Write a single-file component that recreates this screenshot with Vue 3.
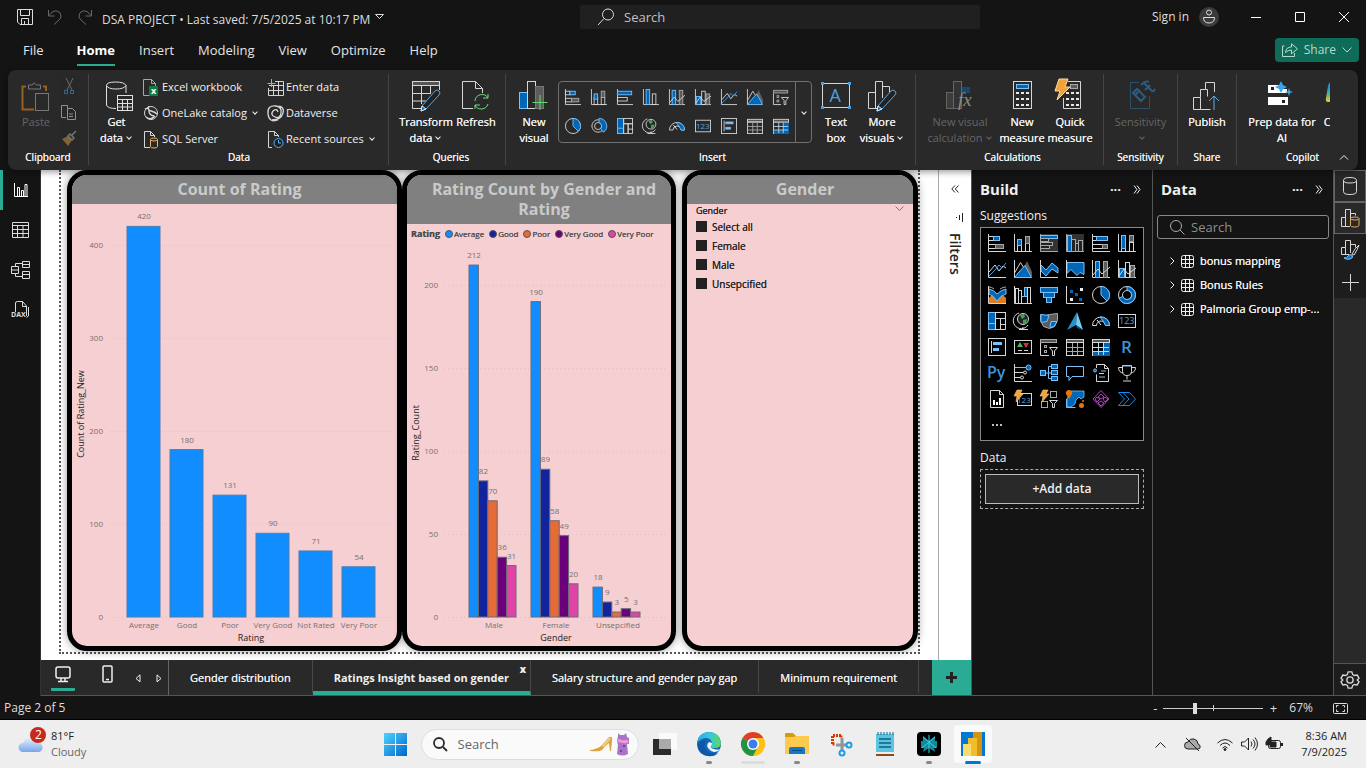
<script setup>
const W = '#d6d6d6'
const B = '#0067b8'
const L = '#7cc0f5'
const G = '#5c5c5c'
const S = '#a8a8a8'
const box = (x, y, w, h, stroke = W, fill = 'none') =>
  `<rect x="${x}" y="${y}" width="${w}" height="${h}" stroke="${stroke}" fill="${fill}"/>`
const line = (d, stroke = W, fill = 'none', w = 1) =>
  `<path d="${d}" stroke="${stroke}" fill="${fill}" stroke-width="${w}"/>`
const dot = (cx, cy, r, fill, stroke = 'none') =>
  `<circle cx="${cx}" cy="${cy}" r="${r}" fill="${fill}" stroke="${stroke}"/>`
const txt = (x, y, size, fill, t, extra = '') =>
  `<text x="${x}" y="${y}" font-size="${size}" fill="${fill}" stroke="none" font-family="Open Sans, sans-serif" ${extra}>${t}</text>`
const axis = line('M.5 0V17.5H18')
const bolt = `<path d="M3 0h5L6 4h3L2 12l1-6H0z" fill="#f2a23a" stroke="#f7cf8b" stroke-width=".6"/>`
const funnel = line('M9.5 9.5H17.5L14.5 13V17.5H12.5V13Z')
const pencil =
  line('M11 31l1-5L25 11q2-2 4 0t0 4L16 29Z', '#5ba7e0', '#222') + `<path d="M11 31l1-5 4 3z" fill="${B}"/>`

const icons = {
  stackedBar: axis + box(0.5, 2.5, 5, 4) + box(5.5, 2.5, 6, 4, L, B) + box(0.5, 10.5, 7, 4) + box(7.5, 10.5, 8, 4, S, G),
  stackedCol: axis + box(3.5, 9.5, 4, 8) + box(3.5, 5.5, 4, 6, L, B) + box(11.5, 9.5, 4, 8) + box(11.5, 2.5, 4, 7, S, G),
  bar: axis + box(0.5, 2.5, 16, 4, L, B) + box(0.5, 9.5, 11, 4),
  col: axis + box(3.5, 0.5, 4, 17, L, B) + box(10.5, 5.5, 4, 12),
  barDim: `<rect width="18" height="18" fill="#333" stroke="none"/>` + line('M.5 0V17.5H18', S) + box(0.5, 1.5, 17, 3, L, B) + box(0.5, 4.5, 8, 3, S, '#222') + box(0.5, 8.5, 12, 3, S, '#222') + box(0.5, 11.5, 9, 3, S, '#222'),
  colDim: `<rect width="18" height="18" fill="#333" stroke="none"/>` + line('M.5 0V17.5H18', S) + box(1.5, 1.5, 4, 16, L, B) + box(5.5, 5.5, 4, 12, S, '#222') + box(9.5, 9.5, 3, 8, S, '#222') + box(12.5, 6.5, 4, 11, S, '#222'),
  fullBar: axis + box(0.5, 2.5, 4, 4) + box(4.5, 2.5, 11, 4, L, B) + box(0.5, 10.5, 10, 4) + box(10.5, 10.5, 5, 4, S, G),
  fullCol: axis + box(3.5, 12.5, 4, 5) + box(3.5, 1.5, 4, 13, L, B) + box(11.5, 8.5, 4, 9) + box(11.5, 1.5, 4, 6, S, G),
  line: axis + line('M1 12L7 5l4 6 4-5 3 2') + line('M1 16L8 9l3-4 3 3 4-5', '#3c9ae8'),
  area: `<path d="M13 1l5 11v5L9 9z" fill="${G}" stroke="none"/>` + line('M.5 13L6.5 2.5 10 8') + line('M.5 17.5L5 12l6-6.500 6.500 12z', L, B) + line('M.5 0V17.5'),
  stackedArea: line('M1 5l5 5 6-7 6 5v5l-6-4-6 7-5-5z', L, B) + axis,
  fullArea: line('M1 2.5h17v12l-4-2-3 3-6-6-4 4z', L, B) + axis,
  comboStack: axis + box(3.5, 1.5, 4, 16, L, B) + box(11.5, 1.5, 4, 16, S, G) + line('M1 15l5-6 4 5 8-7'),
  comboCluster: axis + box(1.5, 8.5, 5, 9, L, B) + box(7.5, 2.5, 4, 15) + box(12.5, 5.5, 4, 12, S, G) + line('M1 16l5-7 4 5 8-6'),
  ribbon: `<path d="M1 17v-5q4-5 8-5t9 5v5z" fill="#e07c1c" stroke="none"/>` + line('M1 3q5 1 8 5 4-4 9-5v5q-5 1-9 7-4-6-8-7z', L, B) + line('M1 1q3 0 5 2M12 3q3-2 6-2', S) + axis,
  waterfall: axis + box(1.5, 2.5, 3, 15) + box(4.5, 4.5, 3, 13) + line('M7.5 10.5h3v-8h3', L) + box(10.5, 1.5, 3, 9, L, B) + box(13.5, 1.5, 3, 16),
  funnelChart: box(0.5, 1.5, 17, 5, L, B) + box(3.5, 6.5, 11, 5, L, B) + box(6.5, 11.5, 5, 5, L, B),
  scatter: axis + box(4.5, 4.5, 2, 2, B, B) + box(9.5, 7.5, 2, 2, B, B) + box(13.5, 12.5, 2, 2, B, B) + box(4.5, 12.5, 2, 2, '#eee', '#eee') + box(14.5, 2.5, 2, 2, '#eee', '#eee'),
  pie: dot(9, 9, 8.5, 'none', W) + line('M9 .5A8.5 8.5 0 0 1 15 15L9 9z', L, B),
  donut: dot(9, 9, 8.5, 'none', W) + dot(9, 9, 4.5, 'none', W) + line('M9 .5A8.5 8.5 0 1 1 1 12l4-1.5A4.5 4.5 0 1 0 9 4.5z', L, B),
  donutSmall: dot(8, 9, 7, 'none', W) + dot(8, 9, 4, 'none', W) + line('M9 .5A8.5 8.5 0 0 1 14 16l-3-4A4.5 4.5 0 0 0 9 5z', L, B),
  treemap: box(0.5, 0.5, 7, 17, L, B) + box(7.5, 0.5, 10, 6) + box(7.5, 6.5, 5, 11) + box(12.5, 6.5, 5, 6) + line('M12.5 12.5v5h5v-5') + line('M.5 11.5h7', L),
  globe: dot(9, 7, 5.5, '#222', W) + `<path d="M6 3l4-1 1 3-3 2zM9 8l4-1-1 4-3 1z" fill="#3fa35b" stroke="none"/>` + line('M5 1a8 8 0 1 0 9 12M9 15v2.5M5 17.5h9'),
  filledMap: line('M.5 2.5l5 1 4-1 8-1v7l-3 6-5 2-6-2-3-6z', S, G) + line('M1 2.5l8 1-2 6-6 1zM11 9.5h6l-3 5-4 1z', L, B),
  azureMap: `<g stroke="none"><path d="M11 0L1 18l9-5z" fill="#2490d0"/><path d="M11 0l6 18-7-5z" fill="#70cdf4"/><path d="M10 13l7 5-6-2z" fill="#0a5a9c"/></g>`,
  gauge: line('M.5 13.5A8.5 8.5 0 0 1 17.5 13.5H13.5A4.5 4.5 0 0 0 4.5 13.5Z') + line('M8 5a8.5 8.5 0 0 1 9.500 8.500h-4l-2-4z', L, B) + line('M9 13l-4-5', '#eee'),
  card: box(0.5, 2.5, 17, 13) + txt(1, 12, 9, '#4ba3e8', '123'),
  multiCard: box(0.5, 0.5, 17, 17) + line('M3.5 3v12') + box(5.5, 4.5, 8, 2, L, L) + box(5.5, 10.5, 5, 2, L, L),
  kpi: box(0.5, 2.5, 17, 13) + `<path d="M3 9l3-5 3 5z" fill="#4cb35d" stroke="none"/><path d="M9 5h6l-3 5z" fill="#e02c38" stroke="none"/>` + line('M4 12.5h4M10 12.5h4'),
  slicer: box(0.5, 1.5, 16, 3, S, '#555') + line('M.5 5v12.5H9') + box(4.5, 7.5, 2, 2, S) + box(4.5, 12.5, 2, 2, S) + funnel,
  table: box(0.5, 1.5, 17, 3, W, '#555') + box(0.5, 4.5, 17, 13) + line('M6.5 5v12M11.5 5v12M1 9.5h16M1 13.5h16', S),
  matrix: box(0.5, 4.5, 17, 13) + `<path d="M12 5h6v13H1v-4h11z" fill="${B}" stroke="none"/>` + line('M6.5 5v12M11.5 5v12M1 9.5h16M1 13.5h16', '#b8daf2') + box(0.5, 1.5, 17, 3, W, '#555'),
  r: txt(3, 15, 17, '#3c95dd', 'R', 'font-weight="600"'),
  py: txt(-1, 14, 16, '#3c95dd', 'Py', 'font-weight="600"'),
  influencers: line('M.5 0v17.5H18M1 8.5h9M1 13.5h6') + line('M1 3.5h11', L) + dot(14.5, 3.5, 2.5, B, L) + dot(11, 8.5, 1.5, '#111', W) + dot(8, 13.5, 1.5, '#111', W),
  decomposition: box(0.5, 6.5, 5, 5, L, B) + box(11.5, 0.5, 6, 4, L, B) + box(11.5, 6.5, 6, 4, L, B) + box(11.5, 12.5, 6, 4, L, B) + line('M6 9h5M8.5 9V2.5h3M8.5 9v5.5h3', L),
  qna: line('M.5 2.5h17v10H6l-3 4v-4H.5z', L),
  narrative: line('M4.5 4V.5h8l4 4v13h-12v-7M12.5.5v4h4M7 9.5h5') + dot(3, 6.5, 1.5, B, L) + line('M9 7h5M7 13h6', L),
  trophy: line('M4.5 1.5h9v6q0 4-4.5 4t-4.5-4zM4.5 3.5h-4q0 5 5 5.5M13.5 3.5h4q0 5-5 5.5M9 11.5v4M5 17h8') + line('M5 2h8', L),
  report: line('M2.5.5h9l4 4v13h-13zM11.5.5v4h4') + line('M6 15v-5M9 15v-3M12 15V8', '#fff', 'none', 2),
  boltCard: box(3.5, 3.5, 14, 12) + txt(3, 13, 8, '#4ba3e8', '123') + bolt,
  boltSlicer: box(1.5, 11.5, 6, 6, S) + box(10.5, 1.5, 6, 6, S) + line('M9.500 10.5h8l-3 3v4h-2v-4z') + bolt,
  arcgis: line('M.5 9v8.500h9', L) + `<path d="M5 1h13v6l-3 2-2-2-3 3-1 4-4 3H1V9z" fill="${B}" stroke="${L}" stroke-width=".8"/><path d="M3 0a3 3 0 0 1 3 4L3 9 0 4a3 3 0 0 1 3-4z" fill="#e8750b" stroke="none"/>` + dot(15.5, 15.5, 2.5, '#e8750b') + dot(17, 11, 1, '#e8750b'),
  apps: line('M9 .5l8 8.500-8 8.500L1 9z', '#a845b8') + line('M9 4l3 3-3 2-3-2zM5 7l3 2-3 3-2-3zM13 7l3 2-3 3-2-3zM9 11l3 2-3 3-3-3z', '#a845b8'),
  automate: line('M.5 2.5h11l6 6.500-6 6.500H.5l6-6.500z', '#1888e8') + line('M5 2.5l6 6.500-6 6.500', '#1888e8'),
  more: dot(5, 9, 1, '#fff') + dot(9, 9, 1, '#fff') + dot(13, 9, 1, '#fff'),

  excel: line('M7 16.5H.5V.5h8l4 4V7M8.5.5v4h4', S) + `<path d="M6 7h9v10H6z" fill="#107c41" stroke="none"/>` + txt(8, 15, 9, '#fff', 'x', 'font-weight="700"'),
  onelake: dot(8, 8, 6.5, 'none', W) + line('M2 4q4-2 4 2t5 5M6 1q-2 4 2 5t6 3M3 12q5 4 9-1', W, 'none', 1.4),
  sql: line('M7 16.5H1.5V.5h6l4 4V6M7.5.5v4h4') + line('M7.5 8.5v7q0 1.5 3.5 1.5t3.5-1.500v-7q0-1.500-3.500-1.500T7.5 8.5q0 1.500 3.500 1.500t3.500-1.500', '#f0b162'),
  enterData: line('M8 2.5h8.500v14H1.5V9M2 6.5h14M2 11.5h14M6.5 7v9M11.5 3v13') + line('M4.5 0v8M.5 4.5h8', '#5fdc6c'),
  dataverse: line('M11 15Q2 18 1 9t8-8q6 1 5 7t-6 4-2-6q4-3 5 1M5 15Q14 15 16 8T9 1', W, 'none', 1.3),
  recent: line('M5 16.5H1.5V.5h6l4 4V6M7.5.5v4h4') + dot(11.5, 12, 4.5, '#202020', '#5cb0f0') + line('M11.5 9v3h2.500', '#5cb0f0'),
  cut: line('M5 0l6 12M12 0L6 12', '#999') + box(3.5, 12.5, 3, 3, '#3d8bc8') + box(9.5, 12.5, 3, 3, '#3d8bc8'),
  copy: line('M5 13.5H.5V1.5h6v3') + line('M6.5 4.5h5l3 3v8h-8zM8 10h4M8 12.5h4'),
  brush: `<path d="M1 9l6-3 4 4-4 6z" fill="#c08a3c" stroke="none"/>` + line('M7 6l2-2 4 4-2 2zM11 5l4-4', '#aaa', 'none', 1.5),

  paste: line('M6 6.5H2.5V29.5H14', '#95611f', 'none', 2) + line('M23 6.5h3V11', '#95611f', 'none', 2) + line('M8.5 9V5h4q1-4 4 0h4v4z', '#777') + box(15.5, 13.5, 13, 17, '#777', '#292929'),
  getData: line('M15 28.5Q6.5 28.5 5.5 25V5.5q0-3.500 9-3.500T25 5.5V13M5.5 5.5Q7 9 15 9t10-3.500', '#e0e0e0') + box(16.5, 15.5, 15, 15, '#e0e0e0', '#292929') + line('M17 19.5h14M17 23.5h14M17 27h14M21.5 20v10M26.5 20v10', '#e0e0e0'),
  transform: box(2.5, 1.5, 27, 4, W, '#555') + line('M2.5 6v22.5H12M11.5 6v18M20.5 6v8M3 13.5h18M3 21h13M29.5 6v4') + pencil,
  refresh: line('M13 28.5H2.5V1.5h13l7 7V13M15.5 1.5v7h7') + line('M15 21a7 7 0 0 1 13-3v-4M28 18h-5M28 24a7 7 0 0 1-13 1v4M15 25h5', '#6ddc80'),
  newVisual: box(1.5, 12.5, 8, 16, L, B) + box(9.5, 1.5, 8, 27) + box(17.5, 6.5, 8, 22, '#777', G) + line('M22 15v15M14.5 22.5h15', '#5fdc6c'),
  textBox: box(2.5, 3.5, 27, 24, W) + txt(9.5, 22, 18, '#4b9fe0', 'A') + [[1, 2], [28, 2], [1, 26], [28, 26]].map(([x, y]) => `<rect x="${x}" y="${y}" width="3" height="3" fill="#4b9fe0" stroke="none"/>`).join(''),
  moreVisuals: line('M2.5 28.5v-16h7M9.5 28.5V1.5h7V18M16.5 6.5h7V12M2.5 28.5h9') + pencil,
  newCalc: box(2.5, 12.5, 7, 16, '#666', '#3c3c3c') + box(9.5, 1.5, 8, 27, '#666', '#333') + `<path d="M18 7h8v6h-8z" fill="#174a70" stroke="none"/>` + `<text x="14" y="26" font-size="19" fill="#8a8a8a" stroke="none" font-style="italic" font-family="Liberation Serif, serif">fx</text>`,
  measure: box(7.5, 1.5, 18, 27) + box(10.5, 4.5, 12, 4, L, B) + [12, 18, 24].map((y) => [10, 15, 20].map((x) => `<rect x="${x}" y="${y}" width="3" height="2" fill="#e8e8e8" stroke="none"/>`).join('')).join(''),
  quick: line('M14 1.5h12.500v27H9.5V18') + box(16.5, 4.5, 7, 4, S, G) + [12, 18, 24].map((y) => [12, 17, 22].map((x) => `<rect x="${x}" y="${y}" width="3" height="2" fill="#e8e8e8" stroke="none"/>`).join('')).join('') + `<path d="M5-1h9l-3 8h5L3 20l3-9H1z" fill="#f2a23a" stroke="#f9dc9f"/>`,
  sensitivity: line('M14 2.5H5.5v26h19V16', '#28506d') + line('M8 13l4-4 8 8-4 4zM10 15l5-5M18 2l8 8q2 3 4-1M16 5q5-5 8-3M20 10l5-5', '#2c5c80', 'none', 2),
  publish: line('M2.5 29.5v-12h7v12zM9.5 17V9.5h5V2.5h9V12M9.5 29.5h10M14.5 9.5h2v7') + line('M23 30V16M18 21l5-5 5 5', '#5cb0f0'),
  prep: `<g stroke="none"><path d="M2 5h12v4h7v4H2zM2 17h20v8H2z" fill="#fff"/><path d="M5 7h3v3H5zM16 20h3v3h-3z" fill="#222"/><path d="M15 1l2 4 4 2-4 2-2 4-2-4-4-2 4-2zM23 8l1 3 3 1-3 1-1 3-1-3-3-1 3-1z" fill="#39a5ec"/></g>`,
  copilot: `<defs><linearGradient id="cp" x1="0" y1="0" x2="0" y2="1"><stop offset=".2" stop-color="#1d8de0"/><stop offset=".6" stop-color="#47b78a"/><stop offset="1" stop-color="#f3c92b"/></linearGradient></defs><path d="M5 2h19l-4 20H2q-3 0-2-4L2 6q1-4 3-4z" fill="url(#cp)" stroke="none"/>`,
}

const menus = ['File', 'Home', 'Insert', 'Modeling', 'View', 'Optimize', 'Help']
const sources = [
  { icon: 'excel', label: 'Excel workbook' },
  { icon: 'enterData', label: 'Enter data' },
  { icon: 'onelake', label: 'OneLake catalog', drop: true },
  { icon: 'dataverse', label: 'Dataverse' },
  { icon: 'sql', label: 'SQL Server' },
  { icon: 'recent', label: 'Recent sources', drop: true },
]
const gallery = ['stackedBar', 'stackedCol', 'bar', 'col', 'comboStack', 'comboCluster', 'line', 'area', 'slicer', 'pie', 'donutSmall', 'treemap', 'globe', 'gauge', 'card', 'multiCard', 'table', 'matrix']
const visuals = ['stackedBar', 'stackedCol', 'barDim', 'colDim', 'fullBar', 'fullCol', 'line', 'area', 'stackedArea', 'fullArea', 'comboStack', 'comboCluster', 'ribbon', 'waterfall', 'funnelChart', 'scatter', 'pie', 'donut', 'treemap', 'globe', 'filledMap', 'azureMap', 'gauge', 'card', 'multiCard', 'kpi', 'slicer', 'table', 'matrix', 'r', 'py', 'influencers', 'decomposition', 'qna', 'narrative', 'trophy', 'report', 'boltCard', 'boltSlicer', 'arcgis', 'apps', 'automate', 'more']

const ratings = [
  ['Average', 420],
  ['Good', 180],
  ['Poor', 131],
  ['Very Good', 90],
  ['Not Rated', 71],
  ['Very Poor', 54],
].map(([name, n], i) => ({ name, n, x: 55 + i * 43, h: n * 0.93 }))

const legend = [
  ['Average', '#118dff'],
  ['Good', '#12239e'],
  ['Poor', '#e66c37'],
  ['Very Good', '#6b007b'],
  ['Very Poor', '#e044a7'],
]
const groups = [
  ['Male', [212, 82, 70, 36, 31]],
  ['Female', [190, 89, 58, 49, 20]],
  ['Unsepcified', [18, 9, 3, 5, 3]],
].map(([name, values], g) => ({
  name,
  x: 62 + g * 62,
  bars: values.map((n, i) => ({ n, x: 62 + g * 62 + i * 9.4, h: n * 1.66, color: legend[i][1] })),
}))
const slicerItems = ['Select all', 'Female', 'Male', 'Unsepcified']
const tables = ['bonus mapping', 'Bonus Rules', 'Palmoria Group emp-...']
const tabs = ['Gender distribution', 'Ratings Insight based on gender', 'Salary structure and gender pay gap', 'Minimum requirement']
</script>

<template>
  <div class="shell">
    <header class="titlebar">
      <div class="quick">
        <button aria-label="Save"><svg width="16" height="16" viewBox="0 0 16 16"><path d="M.5.5h15v15H3l-2.500-2.500zM3.500.500v6h9v-6M4.500 15v-5.500h7V15M7.500 12v3" /></svg></button>
        <button aria-label="Undo" class="dim"><svg width="16" height="16" viewBox="0 0 16 16"><path d="M1.500 1v6h6M2 6.500Q6 1 10 2t4 5q0 2-2 4l-5 4.500" /></svg></button>
        <button aria-label="Redo" class="dim"><svg width="16" height="16" viewBox="0 0 16 16"><path d="M14.500 1v6h-6M14 6.500Q10 1 6 2T2 7q0 2 2 4l5 4.500" /></svg></button>
      </div>
      <button class="doc">DSA PROJECT • Last saved: 7/5/2025 at 10:17 PM
        <svg width="9" height="6" viewBox="0 0 9 6"><path d="M.5.5h8l-4 4z" /></svg>
      </button>
      <label class="topsearch">
        <svg width="18" height="18" viewBox="0 0 18 18"><circle cx="11" cy="6.500" r="5.500" /><path d="M7 10.500L1 17" /></svg>
        <input type="text" placeholder="Search" aria-label="Search" />
      </label>
      <div class="account">
        <button class="sign">Sign in
          <svg width="20" height="20" viewBox="0 0 20 20"><circle cx="10" cy="10" r="10" fill="#3b3b3b" stroke="none" /><circle cx="10" cy="5.500" r="2.500" /><path d="M4.500 10.500h11q0 5.500-5.500 5.500t-5.500-5.500z" /></svg>
        </button>
        <button class="win" aria-label="Minimize"><svg width="12" height="12" viewBox="0 0 12 12"><path d="M1 6.500h10" /></svg></button>
        <button class="win" aria-label="Maximize"><svg width="12" height="12" viewBox="0 0 12 12"><path d="M1.500 1.500h9v9h-9z" /></svg></button>
        <button class="win" aria-label="Close"><svg width="12" height="12" viewBox="0 0 12 12"><path d="M1 1l10 10M11 1L1 11" /></svg></button>
      </div>
    </header>

    <nav class="menubar">
      <button v-for="m in menus" :key="m" :class="{ on: m === 'Home' }">{{ m }}</button>
      <button class="share">
        <svg width="16" height="14" viewBox="0 0 16 14"><path d="M2.500 3H.500v10.500h12V10M3.500 9.500Q4 4 9.500 4V.800l6 5-6 5V7Q6 7 3.500 9.500z" /></svg>
        Share
        <svg width="10" height="6" viewBox="0 0 10 6"><path d="M.5.5L5 5l4.500-4.500" /></svg>
      </button>
    </nav>

    <section class="ribbon" aria-label="Ribbon">
      <div class="group g-clip">
        <div class="body">
          <button class="big off"><svg viewBox="0 0 32 32" v-html="icons.paste" /><span>Paste</span></button>
          <div class="minis">
            <button v-for="i in ['cut', 'copy', 'brush']" :key="i" :aria-label="i"><svg width="16" height="17" viewBox="0 0 16 17" v-html="icons[i]" /></button>
          </div>
        </div>
        <div class="cap">Clipboard</div>
      </div>
      <div class="group g-data">
        <div class="body">
          <button class="big"><svg viewBox="0 0 32 32" v-html="icons.getData" /><span>Get<br />data<i class="chev" /></span></button>
          <div class="sources">
            <button v-for="s in sources" :key="s.label"><svg width="17" height="17" viewBox="0 0 17 17" v-html="icons[s.icon]" />{{ s.label }}<i v-if="s.drop" class="chev" /></button>
          </div>
        </div>
        <div class="cap">Data</div>
      </div>
      <div class="group g-query">
        <div class="body">
          <button class="big"><svg viewBox="0 0 32 32" v-html="icons.transform" /><span>Transform<br />data<i class="chev" /></span></button>
          <button class="big"><svg viewBox="0 0 32 32" v-html="icons.refresh" /><span>Refresh</span></button>
        </div>
        <div class="cap">Queries</div>
      </div>
      <div class="group g-insert">
        <div class="body">
          <button class="big"><svg viewBox="0 0 32 32" v-html="icons.newVisual" /><span>New<br />visual</span></button>
          <div class="gallery">
            <div class="grid9">
              <button v-for="g in gallery" :key="g" :aria-label="g"><svg width="16" height="16" viewBox="0 0 18 18" v-html="icons[g]" /></button>
            </div>
            <button class="expand" aria-label="More visuals"><i class="chev" /></button>
          </div>
          <button class="big"><svg viewBox="0 0 32 32" v-html="icons.textBox" /><span>Text<br />box</span></button>
          <button class="big"><svg viewBox="0 0 32 32" v-html="icons.moreVisuals" /><span>More<br />visuals<i class="chev" /></span></button>
        </div>
        <div class="cap">Insert</div>
      </div>
      <div class="group g-calc">
        <div class="body">
          <button class="big off"><svg viewBox="0 0 32 32" v-html="icons.newCalc" /><span>New visual<br />calculation<i class="chev" /></span></button>
          <button class="big"><svg viewBox="0 0 32 32" v-html="icons.measure" /><span>New<br />measure</span></button>
          <button class="big"><svg viewBox="0 0 32 32" v-html="icons.quick" /><span>Quick<br />measure</span></button>
        </div>
        <div class="cap">Calculations</div>
      </div>
      <div class="group g-sens">
        <div class="body">
          <button class="big off"><svg viewBox="0 0 32 32" v-html="icons.sensitivity" /><span>Sensitivity<br /><i class="chev" /></span></button>
        </div>
        <div class="cap">Sensitivity</div>
      </div>
      <div class="group g-share">
        <div class="body">
          <button class="big"><svg viewBox="0 0 32 32" v-html="icons.publish" /><span>Publish</span></button>
        </div>
        <div class="cap">Share</div>
      </div>
      <div class="group g-copilot">
        <div class="body">
          <button class="big"><svg viewBox="0 0 32 32" v-html="icons.prep" /><span>Prep data for<br />AI</span></button>
          <button class="big"><svg viewBox="0 0 32 32" v-html="icons.copilot" /><span>Copilot</span></button>
        </div>
        <div class="cap">Copilot</div>
      </div>
      <button class="collapse" aria-label="Collapse ribbon"><svg width="10" height="6" viewBox="0 0 10 6"><path d="M1 5.500l4-4 4 4" /></svg></button>
    </section>

    <main class="work">
      <nav class="rail">
        <button class="on" aria-label="Report view"><svg width="16" height="16" viewBox="0 0 16 16"><path d="M1.500 1v13.500H15M4.500 14.500v-9h2v9M8.500 14.500v-6h2v6M12 14.500v-12h2v12" /></svg></button>
        <button aria-label="Table view"><svg width="17" height="16" viewBox="0 0 17 16"><path d="M.5.5h16v15H.500zM1 3.500h15M1 7.500h15M1 11.500h15M5.500 4v11M11 4v11" /></svg></button>
        <button aria-label="Model view"><svg width="19" height="18" viewBox="0 0 19 18"><path d="M.5 5.500h7v7h-7zM1 9h6M11.500.500h7v6h-7zM12 3.500h6M11.500 10.500h7v7h-7zM12 13.500h6M4.500 5.500v-3h7M4.500 12.500v3h7" /></svg></button>
        <button aria-label="DAX query view"><svg width="19" height="18" viewBox="0 0 19 18"><path d="M4.500 11V2q0-1.500 2-1.500h5l4 4.500v10M11.500.500v5h4M17.500 6v9l-2 1.500" /><text x="0" y="16" font-size="7" font-weight="700">DAX</text></svg></button>
      </nav>

      <div class="center">
        <div class="stage">
          <div class="canvas">
            <div class="page">
              <article class="card c1">
                <h2>Count of Rating</h2>
                <svg class="chart" viewBox="0 0 325 442" preserveAspectRatio="xMidYMin meet">
                  <g v-for="t in [0, 100, 200, 300, 400]" :key="t">
                    <line x1="38" x2="321" :y1="413.5 - t * 0.93" :y2="413.5 - t * 0.93" class="gl" />
                    <text x="31" :y="416 - t * 0.93" class="end">{{ t }}</text>
                  </g>
                  <g v-for="b in ratings" :key="b.name">
                    <rect :x="b.x" :y="413 - b.h" width="33" :height="b.h" fill="#118dff" stroke="#4c7fae" />
                    <text :x="b.x + 17" :y="406 - b.h" class="mid">{{ b.n }}</text>
                    <text :x="b.x + 17" y="424" class="mid">{{ b.name }}</text>
                  </g>
                  <text x="179" y="437" class="mid title">Rating</text>
                  <text class="mid title" transform="translate(12 210) rotate(-90)">Count of Rating_New</text>
                </svg>
              </article>
              <article class="card c2">
                <h2>Rating Count by Gender and Rating</h2>
                <div class="legend"><b>Rating</b><span v-for="l in legend" :key="l[0]"><i :style="{ background: l[1] }" />{{ l[0] }}</span></div>
                <svg class="chart" viewBox="0 0 264 402" preserveAspectRatio="xMidYMin meet">
                  <g v-for="t in [0, 50, 100, 150, 200]" :key="t">
                    <line x1="37" x2="260" :y1="373.5 - t * 1.66" :y2="373.5 - t * 1.66" class="gl" />
                    <text x="31" :y="376 - t * 1.66" class="end">{{ t }}</text>
                  </g>
                  <g v-for="g in groups" :key="g.name">
                    <rect v-for="(b, i) in g.bars" :key="i" :x="b.x" :y="373 - b.h" width="9.4" :height="b.h" :fill="b.color" stroke="#6b6a78" />
                    <text v-for="(b, i) in g.bars" :key="'t' + i" :x="b.x + 5" :y="366 - b.h" class="mid">{{ b.n }}</text>
                    <text :x="g.x + 25" y="384" class="mid">{{ g.name }}</text>
                  </g>
                  <text x="149" y="397" class="mid title">Gender</text>
                  <text class="mid title" transform="translate(12 189) rotate(-90)">Rating_Count</text>
                </svg>
              </article>
              <article class="card c3">
                <h2>Gender</h2>
                <div class="slicer">
                  <div class="shead">Gender<svg width="9" height="6" viewBox="0 0 9 6"><path d="M.5.5l4 4 4-4" /></svg></div>
                  <label v-for="s in slicerItems" :key="s"><input type="checkbox" checked />{{ s }}</label>
                </div>
              </article>
            </div>
          </div>
          <aside class="filters">
            <button aria-label="Expand filters"><svg width="8" height="8" viewBox="0 0 8 8"><path d="M4 .5L.8 4 4 7.500M7.500.500L4.300 4l3.200 3.500" /></svg></button>
            <svg width="8" height="10" viewBox="0 0 8 10"><path d="M7.500 0v9M4.500 2v5M1.500 4v1" /></svg>
            <span>Filters</span>
          </aside>
        </div>
        <div class="tabs">
          <div class="views">
            <button class="on" aria-label="Desktop layout"><svg width="16" height="17" viewBox="0 0 16 17"><rect x="1" y="1" width="14" height="11" rx="2" /><path d="M6 12v3M10 12v3M3 15.500h10" /></svg></button>
            <button class="phone" aria-label="Mobile layout"><svg width="11" height="18" viewBox="0 0 11 18"><rect x="1" y="1" width="9" height="16" rx="1" /><path d="M4 14.500h3" /></svg></button>
            <button class="arrow" aria-label="Previous page"><svg width="6" height="9" viewBox="0 0 6 9"><path d="M5 .8v7L1 4.500z" /></svg></button>
            <button class="arrow" aria-label="Next page"><svg width="6" height="9" viewBox="0 0 6 9"><path d="M1 .8v7l4-3.300z" /></svg></button>
          </div>
          <button v-for="(t, i) in tabs" :key="t" class="tab" :class="{ on: i === 1 }">{{ t }}<b v-if="i === 1" class="x">x</b></button>
          <button class="add" aria-label="New page"><svg width="11" height="11" viewBox="0 0 11 11"><path d="M5.500 0v11M0 5.500h11" /></svg></button>
        </div>
      </div>

      <aside class="pane">
        <header><h3>Build</h3><button aria-label="Options" class="dots">···</button><button aria-label="Collapse"><svg width="8" height="9" viewBox="0 0 8 9"><path d="M1 .5L4 4.500 1 8.500M4 .5l3 4-3 4" /></svg></button></header>
        <div class="sub">Suggestions</div>
        <div class="visuals">
          <button v-for="v in visuals" :key="v" :aria-label="v"><svg width="18" height="18" viewBox="0 0 18 18" v-html="icons[v]" /></button>
        </div>
        <div class="sub">Data</div>
        <div class="drop"><button>+Add data</button></div>
      </aside>

      <aside class="pane data">
        <header><h3>Data</h3><button aria-label="Options" class="dots">···</button><button aria-label="Collapse"><svg width="8" height="9" viewBox="0 0 8 9"><path d="M1 .5L4 4.500 1 8.500M4 .5l3 4-3 4" /></svg></button></header>
        <label class="find"><svg width="15" height="15" viewBox="0 0 15 15"><circle cx="6" cy="6" r="5.500" /><path d="M10 10l4.500 4.500" /></svg><input type="text" placeholder="Search" aria-label="Search data" /></label>
        <button v-for="t in tables" :key="t" class="tbl">
          <svg width="5" height="8" viewBox="0 0 5 8"><path d="M.5.5L4 4 .5 7.500" /></svg>
          <svg width="13" height="13" viewBox="0 0 13 13"><rect x=".5" y=".5" width="12" height="12" rx="2" /><path d="M1 4.500h11M1 8.500h11M4.500 1v11M8.500 1v11" /></svg>
          {{ t }}
        </button>
      </aside>

      <nav class="strip">
        <button class="sel" aria-label="Data pane"><svg width="14" height="18" viewBox="0 0 14 18"><path d="M.5 3.500v11q0 3 6.500 3t6.500-3v-11q0-3-6.500-3t-6.500 3q0 2.500 6.500 2.500t6.500-2.500" /></svg></button>
        <button class="sel" aria-label="Build pane"><svg width="19" height="19" viewBox="0 0 19 19"><path d="M9 17.500H.500v-9h4v9M4.500 9V.500h5V17M9.500 4.500h5v2" /><path class="gold" d="M9.500 9.500v7q0 1.500 4 1.500t4.500-1.500v-7q0-1.500-4-1.500T9.500 9.500q0 1.500 4.500 1.500t4-1.500" /></svg></button>
        <button aria-label="Format pane"><svg width="19" height="20" viewBox="0 0 19 20"><path d="M8 14.500H.500v-7h4v7M4.500 8V.500h5V13M9.500 4.500h5v3" /><path d="M18 5q-4 3-7 9l2 1q4-6 5-10z" /><path class="blue" d="M3 18q3 0 4-2t4-1q2 3-2 4t-6-1z" /></svg></button>
        <button aria-label="Add pane"><svg width="17" height="17" viewBox="0 0 17 17"><path d="M8.500 0v17M0 8.500h17" /></svg></button>
        <button class="gear" aria-label="Settings"><svg width="20" height="20" viewBox="0 0 20 20"><circle cx="10" cy="10" r="3.500" /><path d="M8 1h4l1 3 2 1 3-.5 2 3.500-2 2 2 2-2 3.500-3-.5-2 1-1 3H8l-1-3-2-1-3 .5L0 12l2-2-2-2 2-3.500 3 .5 2-1z" /></svg></button>
      </nav>
    </main>

    <footer class="status">
      <span>Page 2 of 5</span>
      <div class="zoom">
        <button aria-label="Zoom out">-</button>
        <input type="range" min="0" max="100" value="31" aria-label="Zoom" />
        <button aria-label="Zoom in">+</button>
        <span class="pct">67%</span>
        <button aria-label="Fit to page"><svg width="15" height="11" viewBox="0 0 15 11"><rect x=".5" y=".5" width="14" height="10" rx="1" /><path d="M3.500 4.500v-2h2M9.500 2.500h2v2M11.500 6.500v2h-2M5.500 8.500h-2v-2" /></svg></button>
      </div>
    </footer>

    <div class="taskbar">
      <button class="weather">
        <svg width="30" height="30" viewBox="0 0 30 30">
          <defs><linearGradient id="cl" x1="0" y1="0" x2="0" y2="1"><stop offset="0" stop-color="#e6effc" /><stop offset="1" stop-color="#79a5e8" /></linearGradient></defs>
          <path d="M6 25a4 4 0 0 1 0-9q2-6 8-5 5 1 6 5a4 4 0 0 1 2 9z" fill="url(#cl)" />
          <circle cx="21" cy="8" r="8" fill="#c42b1c" /><text x="18" y="12" font-size="12" class="badge">2</text>
        </svg>
        <span>81°F<br /><em>Cloudy</em></span>
      </button>
      <div class="apps">
        <button class="start" aria-label="Start"><svg width="23" height="23" viewBox="0 0 23 23"><defs><linearGradient id="st" x1="0" y1="0" x2="1" y2="1"><stop offset="0" stop-color="#4fd2ff" /><stop offset="1" stop-color="#0066ca" /></linearGradient></defs><path d="M0 0h11v11H0zM12 0h11v11H12zM0 12h11v11H0zM12 12h11v11H12z" fill="url(#st)" /></svg></button>
        <label class="pill">
          <svg width="15" height="15" viewBox="0 0 15 15"><circle cx="6" cy="6" r="5" fill="none" stroke="#2b2b2b" stroke-width="1.800" /><path d="M10 10l4 4" stroke="#2b2b2b" stroke-width="1.800" /></svg>
          <input type="text" placeholder="Search" aria-label="Search Windows" />
          <svg width="40" height="24" viewBox="0 0 40 24">
            <path d="M0 18q7-1 11-4l8-9q4-1 3 4l-1 10h-1l-1-8q-5 4-7 7-2 2-12 1z" fill="#d9a441" /><path d="M11 14l8-9 2 2-7 8z" fill="#f0cb7c" />
            <path d="M28 1l2 2h4l2-2 1 4 2 1v6h-2l1 10q-6 3-11 0l1-9-1-4 1-5z" fill="#a774c9" /><path d="M28 8q5 3 10 1" stroke="#f09ad0" stroke-width="3" fill="none" /><circle cx="31" cy="19" r="1" fill="#5b2e8c" /><circle cx="34" cy="14" r="1" fill="#5b2e8c" />
          </svg>
        </label>
        <button class="task" aria-label="Task view"><svg width="24" height="24" viewBox="0 0 24 24"><path d="M6 1h18v17H6z" fill="#fafafa" /><path d="M0 7h18v16H0z" fill="#2b2b2b" /><path d="M6 7h12v10H6z" fill="#aaa" /></svg></button>
        <button class="task run" aria-label="Edge"><svg width="24" height="24" viewBox="0 0 24 24"><defs><linearGradient id="eg" x1="0" y1="0" x2="1" y2="0"><stop offset="0" stop-color="#2aa9e0" /><stop offset=".5" stop-color="#33c8e8" /><stop offset="1" stop-color="#62d84e" /></linearGradient></defs><circle cx="12" cy="12" r="12" fill="#1268b8" /><path d="M0 11Q2 0 12 0t12 11q0 5-6 5-5 0-4-2 1-1 1-3Q14 6 9 6q-5 0-9 5z" fill="url(#eg)" /><path d="M9 9q-3 5 0 9 4 5 12 3-4 4-10 3Q1 22 1 14q1-6 8-5z" fill="#0f56a6" /><path d="M12 10q-3 3-1 6t6 4q4 0 6-3-2 1-6 0-4-1-3-3 1-1 1-3z" fill="#eef4fa" /></svg></button>
        <button class="task wide" aria-label="Chrome"><svg width="24" height="24" viewBox="0 0 24 24"><circle cx="12" cy="12" r="12" fill="#fbc116" /><path d="M12 12L1.600 6A12 12 0 0 1 22.400 6z" fill="#e33b2e" /><path d="M12 12L1.600 6A12 12 0 0 0 12 24l5-9z" fill="#229342" /><path d="M12 6h10.400A12 12 0 0 1 12 24l5.200-9z" fill="#fbc116" /><circle cx="12" cy="12" r="6" fill="#fff" /><circle cx="12" cy="12" r="4.500" fill="#3b7ded" /></svg></button>
        <button class="task run" aria-label="File Explorer"><svg width="24" height="24" viewBox="0 0 24 24"><path d="M0 2q0-1 1-1h7l3 3v6H0z" fill="#d99a0b" /><path d="M0 5h9l2-1h13v18H0z" fill="#fccb4d" /><path d="M4 22v-5q0-2 2-2h12q2 0 2 2v5z" fill="#1676c4" /><path d="M7 18h10v1H7z" fill="#0c4f8c" /></svg></button>
        <button class="task" aria-label="Snipping Tool"><svg width="24" height="24" viewBox="0 0 24 24"><path d="M12 3.500H3.500V13M12 3.500V6M3.500 12H6" stroke="#d83b01" stroke-width="3" stroke-dasharray="2 1" fill="none" /><path d="M13 6v12M7 13h11" stroke="#8d969e" stroke-width="3" fill="none" /><circle cx="20" cy="13" r="2.500" fill="none" stroke="#1ba1e2" stroke-width="2" /><circle cx="13" cy="21" r="2.500" fill="none" stroke="#1ba1e2" stroke-width="2" /></svg></button>
        <button class="task" aria-label="Notepad"><svg width="24" height="24" viewBox="0 0 24 24"><path d="M3 2h18v18H3z" fill="#5cc3e0" /><path d="M3 20h18v2H3z" fill="#eee" /><path d="M3 22h18v2H3z" fill="#8a4b1b" /><path d="M6 7h12M6 11h12M6 15h12" stroke="#11617c" stroke-width="1.500" /><path d="M5 0v3M8 0v3M11 0v3M14 0v3M17 0v3M20 0v3" stroke="#11617c" /></svg></button>
        <button class="task run" aria-label="Perplexity"><svg width="24" height="24" viewBox="0 0 24 24"><rect width="24" height="24" rx="4" fill="#000" /><path d="M12 9L6 4v5H4v7h3l-1 4 6-4 6 4-1-4h3V9h-2V4z" fill="#128a9c" /><path d="M12 3v18M12 10l-7 6M12 10l7 6M6 5l6 5 6-5" stroke="#37d3e8" fill="none" /></svg></button>
        <button class="task cur" aria-label="Power BI"><svg width="24" height="24" viewBox="0 0 24 24"><path d="M0 0h24v24H0z" fill="#0078d4" /><path d="M12 0h9v24h-9z" fill="#d9930b" /><path d="M7 6h9v18H7z" fill="#f0bd2b" /><path d="M2 12h8v12H2z" fill="#f9dc70" /></svg></button>
      </div>
      <div class="tray">
        <svg width="11" height="7" viewBox="0 0 11 7"><path d="M.5 6.500l5-5 5 5" /></svg>
        <svg class="cloud" width="17" height="15" viewBox="0 0 17 15"><path d="M4 12a3.500 3.500 0 0 1 0-7q2-4 6-3t4 5q3 1 2 4-1 1-3 1z" fill="#aaa" /><path d="M2 1l13 13" /></svg>
        <svg width="16" height="13" viewBox="0 0 16 13"><path d="M.5 5Q8-2 15.500 5M3 7.500q5-5 10 0M5.500 10q2.500-3 5 0" /><circle cx="8" cy="11.500" r="1" fill="#222" /></svg>
        <svg width="17" height="14" viewBox="0 0 17 14"><path d="M.5 5v4h3l4 4V1l-4 4zM10 4.500q2 2.500 0 5M12 2.500q4 4.500 0 9M14 .5q5 6.500 0 13" /></svg>
        <svg width="17" height="14" viewBox="0 0 17 14"><rect x="2.500" y="3.500" width="12" height="8" rx="2" /><path d="M16 6v3" stroke-width="2" /><path d="M4 5h6v5H4z" fill="#222" /><path d="M0 5q2-4 5-5v4q1 4-5 4z" fill="#222" /></svg>
        <span class="clock">8:36 AM<br />7/9/2025</span>
      </div>
    </div>
  </div>
</template>

<style>
body { margin: 0; background: #141414; }
</style>

<style scoped>
* { box-sizing: border-box; }
.shell { min-height: 100vh; display: flex; flex-direction: column; background: #141414; color: #f0f0f0; font-family: "Open Sans", "Noto Sans", sans-serif; font-size: 11px; line-height: 16px; overflow: hidden; }
button { font: inherit; color: inherit; background: none; border: 0; padding: 0; display: flex; align-items: center; justify-content: center; flex-shrink: 0; }
input { font: inherit; color: inherit; background: none; border: 0; padding: 0; margin: 0; min-width: 0; outline: 0; }
svg { fill: none; stroke: currentColor; flex-shrink: 0; display: block; overflow: visible; }
svg text { fill: currentColor; stroke: none; }
h2, h3 { margin: 0; }

.titlebar { height: 34px; display: flex; align-items: center; position: relative; color: #dedede; font-size: 12px; }
.quick { display: flex; gap: 14px; padding-left: 17px; }
.dim { color: #686868; }
.doc { margin: 5px 0 0 9px; gap: 5px; white-space: nowrap; }
.doc svg { margin-bottom: 6px; }
.topsearch { position: absolute; left: 580px; right: 386px; top: 5px; height: 24px; background: #202020; border-radius: 2px; display: flex; align-items: center; gap: 9px; padding: 0 17px; font-size: 13px; }
.topsearch input::placeholder { color: #c2c2c2; opacity: 1; }
.account { margin-left: auto; display: flex; align-items: center; }
.sign { gap: 10px; margin-right: 15px; color: #dedede; }
.win { width: 44px; height: 30px; color: #fff; }

.menubar { height: 36px; display: flex; align-items: center; padding: 0 7px 0 23px; gap: 24px; font-size: 13px; }
.menubar button { height: 28px; color: #e4e4e4; padding-bottom: 2px; border-bottom: 2px solid transparent; margin-top: -1px; }
.menubar button:first-child { margin-right: 9px; }
.menubar .on { font-weight: 700; color: #fff; border-bottom-color: #2aab94; }
.menubar .share { margin-left: auto; margin-top: -4px; border: 0; height: 24px; padding: 0 7px; gap: 6px; background: #0e6c58; border-radius: 4px; color: #b8d8cf; font-size: 12px; }

.ribbon { margin: 0 8px; height: 100px; padding: 4px 0 5px; display: flex; background: #292929; border-radius: 8px; position: relative; z-index: 2; overflow: hidden; box-shadow: 0 2px 6px rgba(0, 0, 0, .4); }
.group { display: flex; flex-direction: column; border-right: 1px solid #444; flex-shrink: 0; }
.body { display: flex; align-items: flex-start; height: 75px; padding-top: 6px; }
.cap { text-align: center; font-size: 10px; line-height: 16px; text-shadow: 0 0 0 currentColor; }
.big { flex-direction: column; justify-content: flex-start; line-height: 16px; white-space: nowrap; }
.big svg { width: 32px; height: 32px; margin-bottom: 2px; }
.big span { text-align: center; font-size: 11px; text-shadow: 0 0 0 currentColor; }
.big.off { color: #666; }
.big.off span { text-shadow: none; }
.chev { display: inline-block; width: 4px; height: 4px; border: solid currentColor; border-width: 0 1px 1px 0; transform: rotate(45deg); margin: 0 2px 3px 4px; }
.g-clip { width: 81px; }
.g-clip .big { width: 50px; margin-left: 3px; }
.minis { display: flex; flex-direction: column; gap: 9px; margin-top: -2px; opacity: .6; }
.g-data { width: 300px; padding-left: 1px; }
.g-data .big { width: 53px; }
.sources { display: grid; grid-template-columns: 124px auto; grid-auto-rows: 26px; margin-top: -6px; text-shadow: 0 0 0 currentColor; }
.sources button { justify-content: flex-start; gap: 2px; white-space: nowrap; }
.g-query { width: 117px; padding-left: 8px; }
.g-query .big { width: 58px; }
.g-query .big + .big { width: 42px; }
.g-insert { width: 410px; padding-left: 4px; }
.g-insert .big:first-child { width: 48px; }
.g-insert .big { width: 48px; }
.g-insert .big:last-child { width: 44px; }
.gallery { height: 62px; border: 1px solid #707070; border-radius: 4px; display: flex; margin-top: 1px; }
.grid9 { display: grid; grid-template-columns: repeat(9, 26px); grid-auto-rows: 29px; padding: 0 1px; }
.expand { width: 16px; border-left: 1px solid #707070; }
.expand .chev { margin: 0; }
.g-calc { width: 188px; padding-left: 6px; }
.g-calc .big { width: 76px; }
.g-calc .big + .big { width: 48px; }
.g-sens { width: 74px; }
.g-sens .body, .g-share .body { justify-content: center; }
.g-share { width: 59px; }
.g-copilot { flex: 1; min-width: 0; border: 0; padding: 0 28px 0 8px; }
.g-copilot .body { overflow: hidden; gap: 2px; }
.g-copilot .big { width: 74px; }
.g-copilot .big + .big { width: 42px; }
.g-copilot .cap { padding-left: 30px; }
.collapse { position: absolute; right: 9px; bottom: 10px; }

.work { flex: 1; display: flex; min-height: 0; }
.rail { width: 41px; flex-shrink: 0; border-right: 1px solid #333; display: flex; flex-direction: column; color: #dcdcdc; }
.rail button { height: 40px; border-left: 3px solid transparent; padding-right: 2px; }
.rail .on { border-left-color: #2aab94; color: #fff; }
.center { flex: 1; min-width: 0; display: flex; flex-direction: column; }
.stage { flex: 1; display: flex; min-height: 0; background: #fff; color: #252423; }
.canvas { flex: 1; min-width: 0; padding: 0 18px 6px; display: flex; overflow: hidden; }
.page { flex: 1; display: flex; border: 2px dotted #555; border-top: 0; padding: 0 0 1px 6px; }
.card { border: 5px solid #000; border-radius: 20px; background: #f5cfd2; display: flex; flex-direction: column; overflow: hidden; min-width: 0; min-height: 0; box-shadow: 0 0 8px rgba(0, 0, 0, .4); }
.c1 { flex: 325 1 0; }
.c2 { flex: 264 1 0; }
.c3 { flex: 226 1 0; margin-left: 6px; }
.card h2 { background: #808080; color: #cacaca; font-size: 16px; line-height: 20px; text-align: center; padding: 4px 0 5px 10px; }
.chart { width: 100%; flex: 1; min-height: 0; stroke: none; }
.chart text { font-size: 8px; fill: #77706f; }
.chart .mid { text-anchor: middle; }
.chart .end { text-anchor: end; }
.chart .title { fill: #252423; font-size: 9px; }
.gl { stroke: #dbbfc2; stroke-dasharray: 1 3; }
.legend { display: flex; align-items: center; height: 20px; padding-left: 4px; gap: 5px; font-size: 8px; color: #4f4d4b; white-space: nowrap; text-shadow: 0 0 0 currentColor; }
.legend b { font-size: 9px; }
.legend span { display: flex; align-items: center; gap: 1px; }
.legend i { width: 8px; height: 8px; border-radius: 50%; border: 1px solid #555; }
.slicer { padding: 0 9px; display: flex; flex-direction: column; font-size: 10px; text-shadow: 0 0 0 currentColor; }
.shead { display: flex; justify-content: space-between; font-size: 9px; line-height: 13px; color: #252423; }
.shead svg { margin-top: 2px; color: #777; }
.slicer label { height: 19px; display: flex; align-items: center; gap: 5px; }
.slicer input { appearance: none; width: 11px; height: 11px; background: #212121; }
.filters { width: 33px; flex-shrink: 0; border-left: 1px solid #aaa; display: flex; flex-direction: column; align-items: center; padding-top: 15px; gap: 13px; }
.filters button { height: 8px; }
.filters > svg { margin: 7px 0 0 7px; }
.filters span { writing-mode: vertical-rl; font-size: 14px; font-weight: 600; line-height: 18px; margin-top: -3px; }

.tabs { height: 36px; background: #292929; border-bottom: 1px solid #555; display: flex; }
.views { width: 128px; display: flex; border-right: 1px solid #666; padding-left: 10px; }
.views button { width: 24px; margin-right: 20px; border-bottom: 3px solid transparent; margin-bottom: 4px; }
.views .on { border-bottom-color: #2aab94; border-radius: 1px; }
.views svg { stroke-width: 1.5; }
.views .phone { margin-right: 8px; }
.views .arrow { width: 21px; margin: 4px 0 0; }
.views .arrow svg { stroke-width: 1; }
.tab { padding: 4px 21px 0; border-right: 1px solid #484848; font-size: 11px; position: relative; border-bottom: 4px solid transparent; text-shadow: 0 0 0 currentColor; }
.tab.on { font-weight: 700; border-bottom-color: #2aab94; text-shadow: none; }
.x { position: absolute; top: 1px; right: 4px; font-size: 10px; }
.add { width: 39px; margin-left: auto; background: #2aab94; color: #222; }
.add svg { stroke-width: 3; }

.pane { width: 181px; flex-shrink: 0; border-left: 1px solid #555; border-bottom: 1px solid #555; padding: 0 8px; display: flex; flex-direction: column; }
.pane header { display: flex; align-items: center; height: 38px; gap: 12px; padding-right: 3px; }
.pane h3 { font-size: 15px; line-height: 38px; margin-right: auto; }
.dots { font-weight: 700; font-size: 13px; }
.sub { font-size: 12px; line-height: 16px; }
.visuals { border: 1px solid #888; background: #000; height: 214px; margin: 3px 0 9px; padding: 2px 3px; display: grid; grid-template-columns: repeat(6, 26px); grid-auto-rows: 26px; align-content: start; }
.drop { border: 1px dashed #aaa; height: 40px; margin-top: 3px; padding: 4px; display: flex; }
.drop button { flex: 1; border: 1px solid #bbb; background: #292929; font-size: 12px; font-weight: 600; }
.data { padding: 0 4px; }
.data header { padding: 0 6px 0 4px; }
.find { height: 24px; margin: 7px 0 10px; border: 1px solid #888; border-radius: 3px; display: flex; align-items: center; gap: 6px; padding: 0 12px; font-size: 13px; color: #aaa; }
.find input::placeholder { color: #8e8e8e; opacity: 1; }
.tbl { height: 24px; justify-content: flex-start; gap: 6px; padding-left: 13px; font-size: 11px; white-space: nowrap; text-shadow: 0 0 0 currentColor; }
.strip { width: 33px; flex-shrink: 0; border-left: 1px solid #555; border-bottom: 1px solid #555; background: #292929; display: flex; flex-direction: column; color: #d8d8d8; }
.strip button { height: 32px; background: #1d1d1d; }
.strip .sel { background: #292929; border: 1px solid #666; }
.gold { stroke: #e5a95c; fill: #292929; }
.blue { stroke: #7cc0f5; fill: #1473c4; }
.strip .gear { margin-top: auto; border-top: 1px solid #555; }
.gear svg { stroke-width: 1.5; width: 18px; }

.status { height: 24px; display: flex; align-items: center; padding: 1px 18px 0 4px; font-size: 12px; border-bottom: 1px solid #000; color: #ddd; }
.zoom { margin-left: auto; display: flex; align-items: center; }
.zoom button { min-width: 8px; font-size: 13px; }
.zoom input { appearance: none; width: 100px; height: 12px; margin: 0 6px 0 4px; background: linear-gradient(#ccc, #ccc) center / 100% 1px no-repeat, linear-gradient(#ccc, #ccc) 50% 50% / 1px 6px no-repeat; }
.zoom input::-webkit-slider-thumb { appearance: none; width: 4px; height: 11px; background: #ddd; }
.pct { margin: 0 20px 0 12px; }

.taskbar { height: 48px; background: #eee; color: #222; display: flex; align-items: center; justify-content: space-between; padding: 0 19px 0 17px; }
.weather { width: 344px; justify-content: flex-start; gap: 4px; text-align: left; font-size: 11px; }
.weather svg { stroke: none; margin-top: -4px; }
.weather .badge { fill: #fff; }
.weather em { font-style: normal; color: #666; }
.apps { display: flex; align-items: center; }
.apps svg { stroke: none; }
.start { margin-right: 14px; }
.pill { width: 218px; height: 31px; border: 1px solid #ddd; border-radius: 16px; background: #fafafa; display: flex; align-items: center; gap: 10px; padding: 0 8px 0 11px; margin-right: 4px; font-size: 13px; }
.pill input { flex: 1; }
.pill input::placeholder { color: #666; opacity: 1; }
.task { width: 38px; height: 38px; margin: 0 3px; border-radius: 4px; position: relative; }
.run::after, .cur::after, .wide::after { content: ""; position: absolute; bottom: -1px; width: 6px; height: 3px; border-radius: 2px; background: #888; }
.cur { background: #fafafa; }
.cur::after { width: 16px; background: #0078d4; }
.wide::after { width: 24px; background: #ddd; }
.tray { display: flex; align-items: center; justify-content: flex-end; width: 330px; gap: 8px; }
.cloud { margin: 0 8px 0 10px; }
.clock { text-align: right; font-size: 11px; margin-left: 10px; white-space: nowrap; }
</style>
